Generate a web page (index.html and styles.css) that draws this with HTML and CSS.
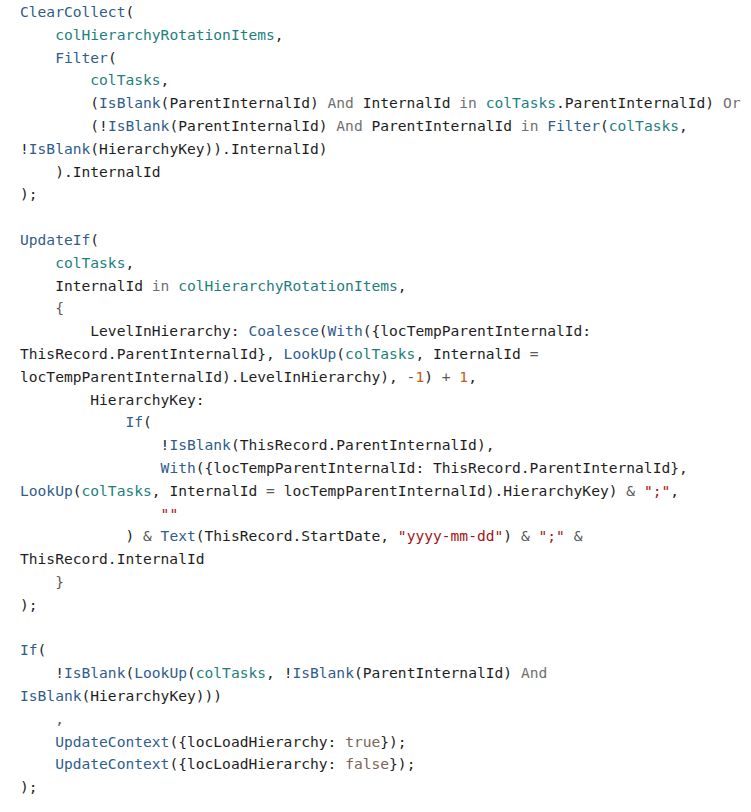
FILE: index.html
```html
<!DOCTYPE html>
<html>
<head>
<meta charset="utf-8">
<link rel="stylesheet" href="styles.css">
</head>
<body>
<pre class="code"><span class="fn">ClearCollect</span>(
    <span class="col">colHierarchyRotationItems</span>,
    <span class="fn">Filter</span>(
        <span class="col">colTasks</span>,
        (<span class="fn">IsBlank</span>(ParentInternalId) <span class="kw">And</span> InternalId <span class="kw">in</span> <span class="col">colTasks</span>.ParentInternalId) <span class="kw">Or</span>
        (!<span class="fn">IsBlank</span>(ParentInternalId) <span class="kw">And</span> ParentInternalId <span class="kw">in</span> <span class="fn">Filter</span>(<span class="col">colTasks</span>,
!<span class="fn">IsBlank</span>(HierarchyKey)).InternalId)
    ).InternalId
);

<span class="fn">UpdateIf</span>(
    <span class="col">colTasks</span>,
    InternalId <span class="kw">in</span> <span class="col">colHierarchyRotationItems</span>,
    <span class="op">{</span>
        LevelInHierarchy: <span class="fn">Coalesce</span>(<span class="fn">With</span>({locTempParentInternalId:
ThisRecord.ParentInternalId}, <span class="fn">LookUp</span>(<span class="col">colTasks</span>, InternalId <span class="op">=</span>
locTempParentInternalId).LevelInHierarchy), <span class="op">-</span><span class="num">1</span>) <span class="op">+</span> <span class="num">1</span>,
        HierarchyKey:
            <span class="fn">If</span>(
                !<span class="fn">IsBlank</span>(ThisRecord.ParentInternalId),
                <span class="fn">With</span>({locTempParentInternalId: ThisRecord.ParentInternalId},
<span class="fn">LookUp</span>(<span class="col">colTasks</span>, InternalId <span class="op">=</span> locTempParentInternalId).HierarchyKey) <span class="op">&amp;</span> <span class="str">";"</span>,
                <span class="str">""</span>
            ) <span class="op">&amp;</span> <span class="fn">Text</span>(ThisRecord.StartDate, <span class="str">"yyyy-mm-dd"</span>) <span class="op">&amp;</span> <span class="str">";"</span> <span class="op">&amp;</span>
ThisRecord.InternalId
    <span class="op">}</span>
);

<span class="fn">If</span>(
    !<span class="fn">IsBlank</span>(<span class="fn">LookUp</span>(<span class="col">colTasks</span>, !<span class="fn">IsBlank</span>(ParentInternalId) <span class="kw">And</span>
<span class="fn">IsBlank</span>(HierarchyKey)))
    <span class="op">,</span>
    <span class="fn">UpdateContext</span>({locLoadHierarchy: <span class="bool">true</span>});
    <span class="fn">UpdateContext</span>({locLoadHierarchy: <span class="bool">false</span>});
);</pre>
</body>
</html>
```

FILE: styles.css
```css
html, body {
  margin: 0;
  padding: 0;
  background: #ffffff;
}

.code {
  margin: 0;
  padding: 1px 0 0 20px;
  font-family: "DejaVu Sans Mono", "Liberation Mono", monospace;
  font-size: 14.6px;
  line-height: 22.8px;
  color: #1e1e1e;
  white-space: pre;
}

.fn { color: #2f5d8c; }
.col { color: #1d7f7c; }
.kw { color: #707070; }
.bool { color: #7a6656; }
.num { color: #c25a12; }
.str { color: #a31515; }
.op { color: #5a5a5a; }
```
